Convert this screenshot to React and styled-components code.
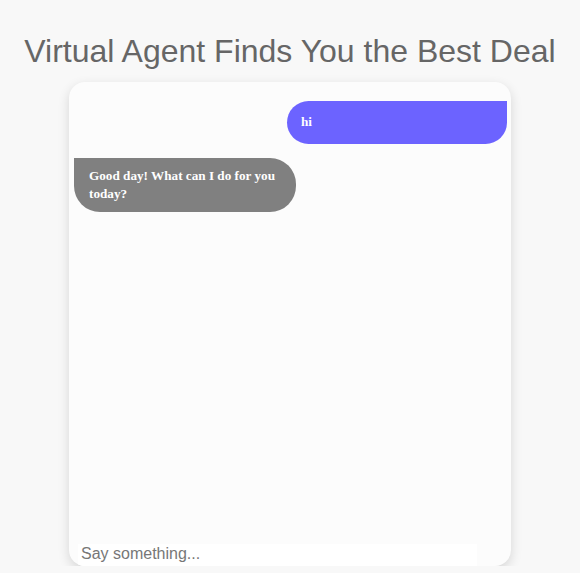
import React from 'react'
import styled, { createGlobalStyle } from 'styled-components'

const GlobalStyle = createGlobalStyle`
    body {
        margin: 0;
        background-color: #f8f8f8;
        font-family: "Liberation Sans", Arial, sans-serif;
    }
`

const Page = styled.div`
    display: flex;
    flex-direction: column;
    align-items: center;
`

const Title = styled.h1`
    font-size: 32px;
    font-weight: 400;
    color: #666666;
    margin: 33px 0 12px;
    line-height: 37px;
`

const ChatCard = styled.div`
    width: 442px;
    height: 484px;
    background-color: #fcfcfc;
    border-radius: 16px;
    box-shadow: 0 4px 12px rgba(0, 0, 0, 0.14);
    display: flex;
    flex-direction: column;
    overflow: hidden;
`

const Messages = styled.div`
    flex: 1;
    display: flex;
    flex-direction: column;
    gap: 14px;
    padding: 19px 4px 0 5px;
`

const Bubble = styled.div`
    width: ${props => (props.$user ? '220px' : '222px')};
    box-sizing: border-box;
    align-self: ${props => (props.$user ? 'flex-end' : 'flex-start')};
    background-color: ${props => (props.$user ? '#6c63ff' : '#808080')};
    border-radius: ${props => (props.$user ? '22px 0 22px 22px' : '0 26px 26px 26px')};
    padding: ${props => (props.$user ? '12px 14px 13px' : '9px 15px')};
    color: #ffffff;
    font-family: "Liberation Serif", "Times New Roman", serif;
    font-weight: 700;
    font-size: 13.2px;
    line-height: 18px;
`

const Input = styled.input`
    width: 399px;
    box-sizing: border-box;
    margin: 0 0 0 9px;
    padding: 0 3px 2px;
    border: none;
    outline: none;
    background-color: #ffffff;
    font-family: "Liberation Sans", Arial, sans-serif;
    font-size: 16px;
    line-height: 20px;
    color: #333;

    &::placeholder {
        color: #777777;
    }
`

function App() {
    return (
        <Page>
            <GlobalStyle />
            <Title>Virtual Agent Finds You the Best Deal</Title>
            <ChatCard>
                <Messages>
                    <Bubble $user>hi</Bubble>
                    <Bubble>Good day! What can I do for you today?</Bubble>
                </Messages>
                <Input placeholder="Say something..." />
            </ChatCard>
        </Page>
    )
}

export default App
